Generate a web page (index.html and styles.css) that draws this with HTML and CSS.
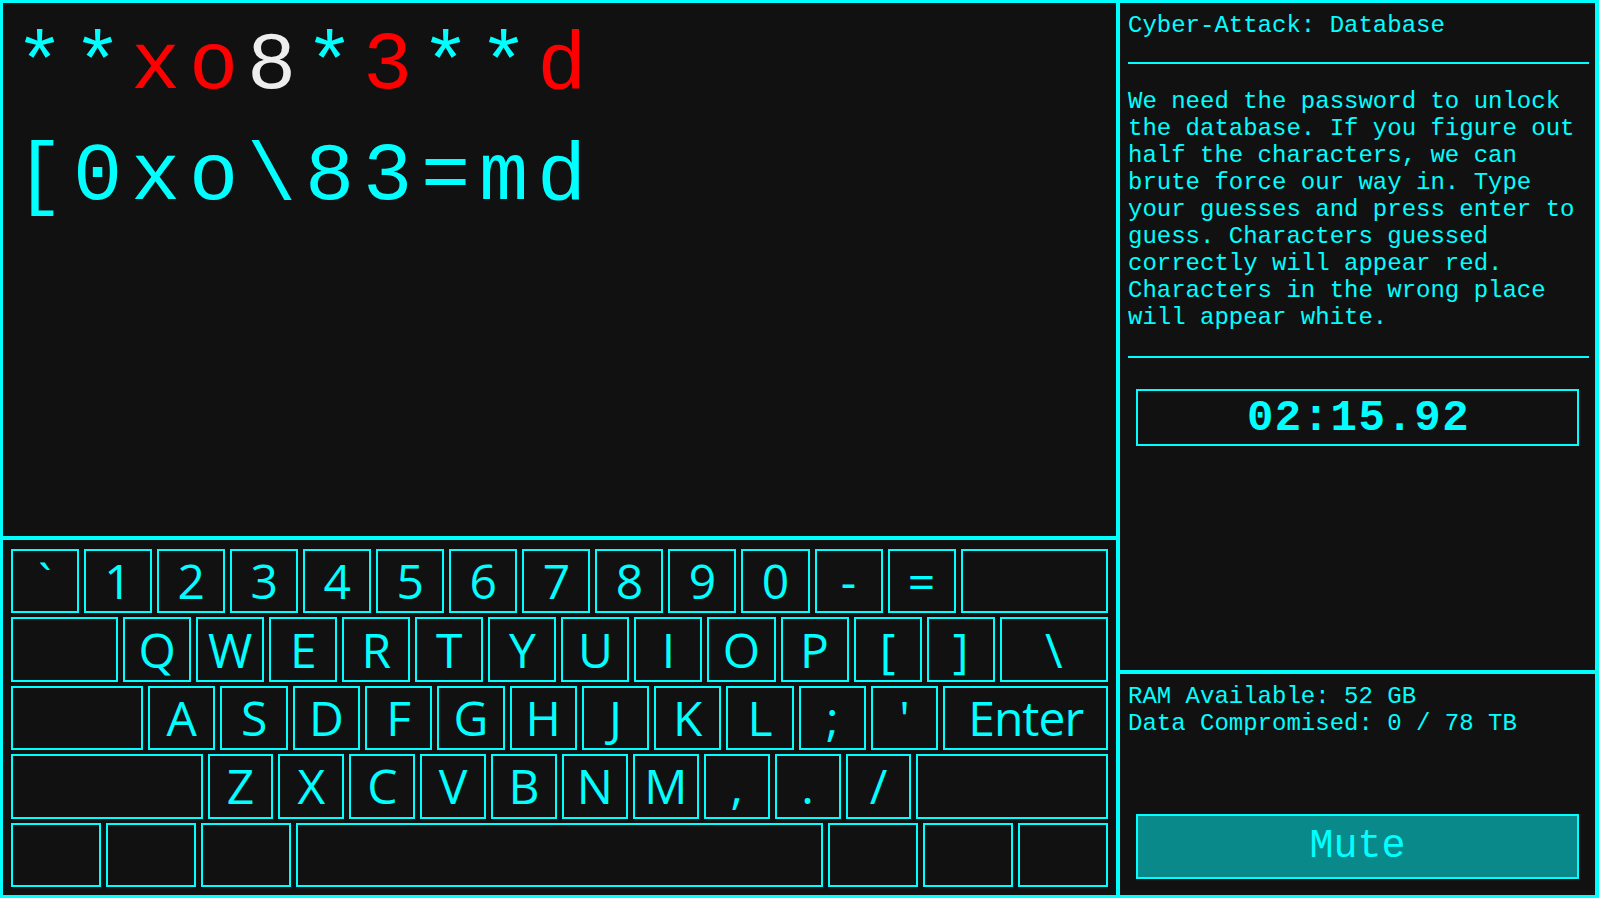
FILE: index.html
```html
<!DOCTYPE html>
<html lang="en">
<head>
<meta charset="utf-8">
<title>Cyber-Attack: Database</title>
<link rel="stylesheet" href="styles.css">
</head>
<body>
<div class="app">
  <div class="left">
    <div class="display">
      <div class="line"><span class="c">**</span><span class="r">xo</span><span class="w">8</span><span class="c">*</span><span class="r">3</span><span class="c">**</span><span class="r">d</span></div>
      <div class="line">[0xo\83=md</div>
    </div>
    <div class="keyboard">
      <div class="row">
        <div class="key">`</div><div class="key">1</div><div class="key">2</div><div class="key">3</div><div class="key">4</div><div class="key">5</div><div class="key">6</div><div class="key">7</div><div class="key">8</div><div class="key">9</div><div class="key">0</div><div class="key">-</div><div class="key">=</div><div class="key k-bs"></div>
      </div>
      <div class="row">
        <div class="key k-tab"></div><div class="key">Q</div><div class="key">W</div><div class="key">E</div><div class="key">R</div><div class="key">T</div><div class="key">Y</div><div class="key">U</div><div class="key">I</div><div class="key">O</div><div class="key">P</div><div class="key">[</div><div class="key">]</div><div class="key k-bsl">\</div>
      </div>
      <div class="row">
        <div class="key k-caps"></div><div class="key">A</div><div class="key">S</div><div class="key">D</div><div class="key">F</div><div class="key">G</div><div class="key">H</div><div class="key">J</div><div class="key">K</div><div class="key">L</div><div class="key">;</div><div class="key">'</div><div class="key k-enter">Enter</div>
      </div>
      <div class="row">
        <div class="key k-shift"></div><div class="key">Z</div><div class="key">X</div><div class="key">C</div><div class="key">V</div><div class="key">B</div><div class="key">N</div><div class="key">M</div><div class="key">,</div><div class="key">.</div><div class="key">/</div><div class="key k-shift"></div>
      </div>
      <div class="row">
        <div class="key"></div><div class="key"></div><div class="key"></div><div class="key k-space"></div><div class="key"></div><div class="key"></div><div class="key"></div>
      </div>
    </div>
  </div>
  <div class="right">
    <div class="info">
      <div class="title">Cyber-Attack: Database</div>
      <div class="rule rule-top"></div>
      <p class="desc">We need the password to unlock the database. If you figure out half the characters, we can brute force our way in. Type your guesses and press enter to guess. Characters guessed correctly will appear red. Characters in the wrong place will appear white.</p>
      <div class="rule rule-bottom"></div>
      <div class="timer">02:15.92</div>
    </div>
    <div class="stats">
      <div class="stat">RAM Available: 52 GB</div>
      <div class="stat">Data Compromised: 0 / 78 TB</div>
      <div class="mute">Mute</div>
    </div>
  </div>
</div>
</body>
</html>
```
FILE: styles.css
```css
html, body {
  margin: 0;
  padding: 0;
  background: #111111;
}

.app {
  width: 1599px;
  height: 898px;
  box-sizing: border-box;
  padding: 3px 4px 3px 3px;
  background: #00ffff;
  display: grid;
  grid-template-columns: 1113px 475px;
  column-gap: 4px;
}

.left, .right {
  display: flex;
  flex-direction: column;
  gap: 4px;
  min-height: 0;
}

/* ---------- guess display ---------- */
.display {
  height: 533px;
  flex: none;
  box-sizing: border-box;
  background: #111111;
  padding: 8px 8px 8px 12px;
  font-family: "Liberation Mono", "DejaVu Sans Mono", monospace;
  font-size: 82px;
  letter-spacing: 8.8px;
  line-height: 111px;
  color: #00ffff;
}

.line {
  white-space: pre;
}

.c { color: #00ffff; }
.r { color: #ff0000; }
.w { color: #eeeeee; }

/* ---------- keyboard ---------- */
.keyboard {
  flex: 1;
  box-sizing: border-box;
  background: #111111;
  padding: 9px 8px 8px 8px;
  display: flex;
  flex-direction: column;
  gap: 4px;
}

.row {
  flex: 1;
  display: flex;
  gap: 5px;
}

.key {
  flex: 1 1 0;
  min-width: 0;
  box-sizing: border-box;
  border: 2px solid #00ffff;
  display: flex;
  align-items: center;
  justify-content: center;
  font-family: "Open Sans", "Noto Sans", sans-serif;
  font-size: 48px;
  line-height: 1;
  color: #00ffff;
}

.k-bs { flex-grow: 2.24; }
.k-tab { flex-grow: 1.61; }
.k-bsl { flex-grow: 1.63; }
.k-caps { flex-grow: 2.025; }
.k-enter { flex-grow: 2.54; letter-spacing: -1px; }
.k-shift { flex-grow: 3.03; }
.k-space { flex-grow: 6.08; }

/* ---------- info panel ---------- */
.info {
  height: 667px;
  flex: none;
  box-sizing: border-box;
  background: #111111;
  padding: 9px 6px 0 8px;
  display: flex;
  flex-direction: column;
  font-family: "Liberation Mono", "DejaVu Sans Mono", monospace;
  font-size: 24px;
  line-height: 27px;
  color: #00ffff;
}

.title {
  margin: 0;
}

.rule {
  height: 2px;
  background: #00ffff;
}

.rule-top {
  margin: 23px 0 24px 0;
}

.desc {
  margin: 0;
}

.rule-bottom {
  margin: 25px 0 0 0;
}

.timer {
  margin: 31px 10px 0 8px;
  height: 57px;
  box-sizing: border-box;
  border: 2px solid #00ffff;
  display: flex;
  align-items: center;
  justify-content: center;
  padding-left: 2px;
  font-weight: bold;
  font-size: 44px;
  letter-spacing: 1.5px;
  line-height: 1;
}

/* ---------- stats panel ---------- */
.stats {
  flex: 1;
  box-sizing: border-box;
  background: #111111;
  padding: 9px 6px 16px 8px;
  display: flex;
  flex-direction: column;
  font-family: "Liberation Mono", "DejaVu Sans Mono", monospace;
  font-size: 24px;
  line-height: 27px;
  color: #00ffff;
}

.mute {
  margin: auto 10px 0 8px;
  height: 65px;
  box-sizing: border-box;
  border: 2px solid #00ffff;
  background: #098989;
  display: flex;
  align-items: center;
  justify-content: center;
  font-size: 40px;
  line-height: 1;
  color: #00ffff;
}
```
